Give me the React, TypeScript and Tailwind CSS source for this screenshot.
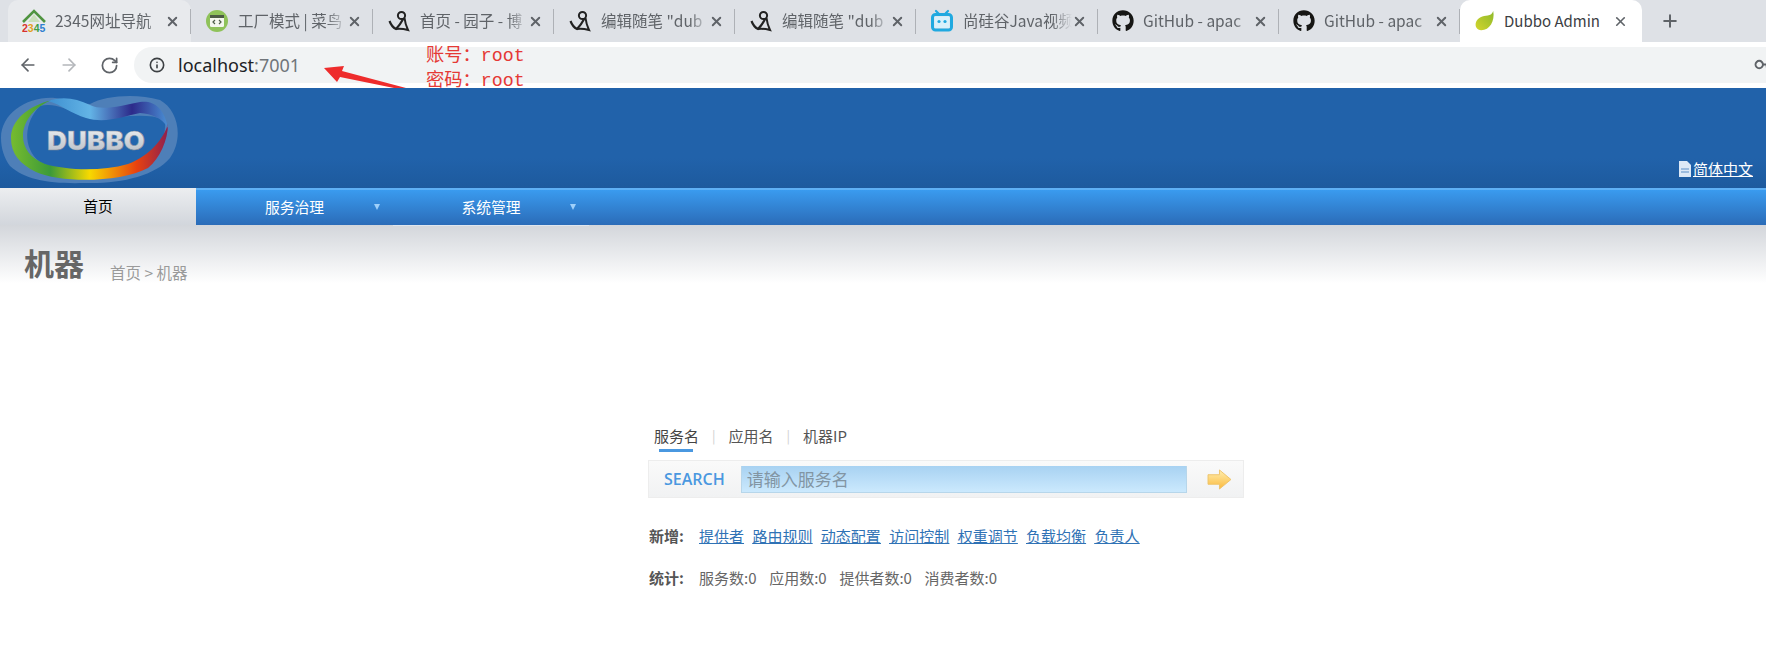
import React from "react";
import { FaGithub } from "react-icons/fa";
import { ArrowLeft, ArrowRight, RotateCw, Info, X, Plus, Key } from "lucide-react";

const cjk = "font-['Noto_Sans_CJK_SC','Noto_Sans',sans-serif]";

const House = () => (
  <svg viewBox="0 0 24 24" className="w-6 h-6 shrink-0">
    <path d="M6 13 L12 5 L18 13 Z" fill="#c9dfba" />
    <path d="M1 13 L12 2 L23 13" fill="none" stroke="#4f9440" strokeWidth="2.6" />
    <text x="0" y="23" fontSize="10.5" fontWeight="700" fontFamily="Liberation Sans, sans-serif">
      <tspan fill="#d8322f">2</tspan>
      <tspan fill="#e3a01b">3</tspan>
      <tspan fill="#3f9f45">4</tspan>
      <tspan fill="#2f7fd0">5</tspan>
    </text>
  </svg>
);

const CodeBadge = () => (
  <svg viewBox="0 0 24 24" className="w-6 h-6 shrink-0">
    <circle cx="12" cy="12" r="11" fill="#8fc25a" />
    <rect x="5" y="6" width="14" height="12" rx="1.5" fill="#f4f7ee" />
    <rect x="5" y="6" width="14" height="3" fill="#4d5c46" />
    <path d="M10 11 L8 13 L10 15 M14 11 L16 13 L14 15" fill="none" stroke="#4d5c46" strokeWidth="1.2" />
  </svg>
);

const Swirl = () => (
  <svg viewBox="0 0 24 24" className="w-6 h-6 shrink-0">
    <circle cx="14.5" cy="6.5" r="3.6" fill="none" stroke="#222" strokeWidth="2" />
    <path d="M2.5 12 C4 16 6 18.5 9 20 C12 17 14 14 16.5 9.5" fill="none" stroke="#222" strokeWidth="2.2" />
    <path d="M17.5 9 C18 13 19 17 21 21 C17 20 13 19.5 9 20" fill="none" stroke="#222" strokeWidth="2" />
  </svg>
);

const TvIcon = () => (
  <svg viewBox="0 0 24 24" className="w-6 h-6 shrink-0">
    <path d="M6 2 L9 5 M18 2 L15 5" stroke="#20a9e0" strokeWidth="2.2" strokeLinecap="round" />
    <rect x="2.5" y="5.5" width="19" height="15.5" rx="3" fill="none" stroke="#20a9e0" strokeWidth="3" />
    <rect x="4.5" y="7.5" width="15" height="11.5" fill="#d9f1fb" />
    <circle cx="9" cy="12.5" r="1.6" fill="#20a9e0" />
    <circle cx="15" cy="12.5" r="1.6" fill="#20a9e0" />
  </svg>
);

const Leaf = () => (
  <svg viewBox="0 0 24 24" className="w-[22px] h-[22px] shrink-0">
    <defs>
      <linearGradient id="leaf" x1="0" y1="1" x2="1" y2="0">
        <stop offset="0" stopColor="#d3d52c" />
        <stop offset="1" stopColor="#8db92a" />
      </linearGradient>
    </defs>
    <path d="M21 1 C23 12 17 22 8 22 C3 22 1 18 2 14 C3.5 8 10 6.5 15 6 C18 5.5 20 4 21 1 Z" fill="url(#leaf)" />
  </svg>
);

const tabs = [
  { icon: <House />, title: "2345网址导航", w: "w-[183px]", bg: "bg-[#e8eaed] rounded-t-[10px]" },
  { icon: <CodeBadge />, title: "工厂模式 | 菜鸟", w: "w-[182px]", bg: "" },
  { icon: <Swirl />, title: "首页 - 园子 - 博", w: "w-[181px]", bg: "" },
  { icon: <Swirl />, title: '编辑随笔 "dub', w: "w-[181px]", bg: "" },
  { icon: <Swirl />, title: '编辑随笔 "dub', w: "w-[181px]", bg: "" },
  { icon: <TvIcon />, title: "尚硅谷Java视频", w: "w-[182px]", bg: "" },
  { icon: <FaGithub className="w-[22px] h-[22px] shrink-0 text-[#161614]" />, title: "GitHub - apac", w: "w-[181px]", bg: "" },
  { icon: <FaGithub className="w-[22px] h-[22px] shrink-0 text-[#161614]" />, title: "GitHub - apac", w: "w-[181px]", bg: "" },
];

const TabStrip = () => (
  <div className={`h-[42px] bg-[#dee1e6] flex items-end ${cjk}`}>
    <div className="w-[8px]" />
    {tabs.map((t, i) => (
      <div key={i} className={`${t.w} ${t.bg} h-[42px] flex items-center pl-[14px]`}>
        {t.icon}
        <span className="flex-1 ml-[9px] overflow-hidden whitespace-nowrap text-[15.5px] text-[#5f6368] [mask-image:linear-gradient(to_right,black_82%,transparent)]">
          {t.title}
        </span>
        <X className="w-[15px] h-[15px] shrink-0 text-[#5f6368]" strokeWidth={3} />
        <span className="w-px h-[25px] ml-[10px] bg-[#aeb1b6]" />
      </div>
    ))}
    <div className="w-[182px] h-[42px] bg-white rounded-t-[10px] flex items-center pl-[14px] pr-[14px] gap-[8px]">
      <Leaf />
      <span className="flex-1 whitespace-nowrap text-[15px] text-[#3c4043]">Dubbo Admin</span>
      <X className="w-[15px] h-[15px] shrink-0 text-[#5f6368]" strokeWidth={2.6} />
    </div>
    <div className="h-[42px] flex items-center pl-[18px]">
      <Plus className="w-[20px] h-[20px] text-[#5f6368]" strokeWidth={2.4} />
    </div>
  </div>
);

const Toolbar = () => (
  <div className="relative h-[46px] bg-white flex items-center overflow-hidden">
    <div className="flex items-center gap-[21px] pl-[18px] pr-[15px]">
      <ArrowLeft className="w-[20px] h-[20px] text-[#5f6368]" strokeWidth={2} />
      <ArrowRight className="w-[20px] h-[20px] text-[#b4b7bb]" strokeWidth={2} />
      <RotateCw className="w-[19px] h-[19px] text-[#5f6368]" strokeWidth={2.2} />
    </div>
    <div className="flex-1 h-[36px] bg-[#f1f3f4] rounded-l-[18px] flex items-center pl-[15px] gap-[13px]">
      <Info className="w-[16px] h-[16px] text-[#3c4043]" strokeWidth={2.4} />
      <span className="text-[18px] font-['Noto_Sans',sans-serif] text-[#202124]">
        localhost<span className="text-[#70757a]">:7001</span>
      </span>
    </div>
    <Key className="absolute right-[-5px] top-[15px] w-[16px] h-[16px] text-[#5f6368] rotate-45" strokeWidth={3} />
    {/* annotation drawn over the screenshot */}
    <div className="absolute left-[426px] top-[2px] text-[#e53935] text-[18.3px] leading-[25px] font-['Liberation_Mono','Noto_Sans_CJK_SC',monospace]">
      <div>账号：root</div>
      <div>密码：root</div>
    </div>
    <svg className="absolute left-[322px] top-[22px]" width="90" height="24" viewBox="0 0 90 24">
      <path d="M2 4 L22 2 L20 7 L84 24 L72 24 L18 13 L15 18 Z" fill="#ee2c2c" />
    </svg>
  </div>
);

const Logo = () => (
  <svg viewBox="0 0 182 100" className="w-[182px] h-[100px] shrink-0">
    <defs>
      <linearGradient id="ring" x1="0" y1="0" x2="1" y2="0">
        <stop offset="0" stopColor="#76bb2f" />
        <stop offset="0.25" stopColor="#3c9a38" />
        <stop offset="0.5" stopColor="#f7d900" />
        <stop offset="0.8" stopColor="#e8420f" />
        <stop offset="1" stopColor="#8e1f4f" />
      </linearGradient>
      <linearGradient id="top" x1="0" y1="0" x2="1" y2="0">
        <stop offset="0" stopColor="#3e8fd0" />
        <stop offset="0.35" stopColor="#63b4e6" />
        <stop offset="0.7" stopColor="#2c2a8a" />
        <stop offset="1" stopColor="#4a8fd4" />
      </linearGradient>
      <linearGradient id="word" x1="0" y1="0" x2="0" y2="1">
        <stop offset="0" stopColor="#f0f2f4" />
        <stop offset="1" stopColor="#b3bac3" />
      </linearGradient>
    </defs>
    <path d="M1 50 C1 25 28 8 55 10 C70 12 80 16 90 16 C105 8 135 5 160 12 C178 22 184 50 170 70 C155 88 120 96 85 95 C50 96 25 92 10 78 C4 70 1 60 1 50 Z" fill="#4e7fb8" />
    <path d="M40 18 C24 34 22 60 40 74 C60 86 120 86 150 70 C162 60 166 46 165 32 C140 22 110 34 85 28 C68 22 54 14 40 18 Z" fill="#2365ad" />
    <path d="M52 12 C28 18 11 32 11 50 C11 66 20 76 36 84 C60 95 120 95 148 80 C160 70 168 52 168 36 C164 50 150 68 128 76 C100 84 66 82 45 76 C30 70 23 60 23 48 C23 32 36 18 52 12 Z" fill="url(#ring)" />
    <path d="M48 13 C62 8 76 10 90 17 C102 23 120 18 140 14 C152 12 164 18 168 40 C162 30 152 26 140 25 C124 28 106 36 86 30 C72 26 60 16 48 13 Z" fill="url(#top)" />
    <text x="47" y="62" fontSize="26" fontWeight="900" fill="url(#word)" textLength="98" lengthAdjust="spacingAndGlyphs" fontFamily="Inter, Liberation Sans, sans-serif" stroke="#7f8b9a" strokeWidth="0.5">
      DUBBO
    </text>
  </svg>
);

const Banner = () => (
  <div className={`h-[100px] bg-[#2162aa] bg-gradient-to-b from-[#2162aa] from-[70%] to-[#1d5a9e] flex items-start justify-between ${cjk}`}>
    <Logo />
    <a className="self-end mb-[9px] mr-[13px] flex items-center gap-[1px] text-white text-[15px] underline leading-[20px]">
      <svg viewBox="0 0 14 16" className="w-[14px] h-[16px]">
        <path d="M1 0 H9 L13 4 V16 H1 Z" fill="#dce8f6" />
        <path d="M3 8 H11 M3 11 H11" stroke="#5b8ec6" strokeWidth="1.2" />
      </svg>
      简体中文
    </a>
  </div>
);

const Caret = () => (
  <span className="absolute right-[13px] top-[14px] w-0 h-0 border-x-[3.5px] border-x-transparent border-t-[6px] border-t-[#9fd0fa]" />
);

const Nav = () => (
  <div className={`h-[37px] flex bg-gradient-to-b from-[#3a9bef] to-[#2b6cb8] border-t-2 border-[#5fb0f5] text-[14.8px] ${cjk}`}>
    <div className="w-[196px] -mt-[2px] h-[37px] bg-gradient-to-b from-[#eceef0] to-[#d2d6dc] flex items-center justify-center text-black">
      首页
    </div>
    <div className="relative w-[197px] flex items-center justify-center text-white">
      服务治理
      <Caret />
    </div>
    <div className="relative w-[196px] h-[36px] flex items-center justify-center text-white border-b border-[#dfe6ee]">
      系统管理
      <Caret />
    </div>
  </div>
);

const PageTitle = () => (
  <div className={`h-[78px] bg-gradient-to-b from-[#d3d6db] to-white to-[75%] flex items-start pl-[24px] pt-[17px] ${cjk}`}>
    <h1 className="text-[30px] leading-[40px] font-bold text-[#666]">机器</h1>
    <span className="ml-[26px] mt-[19px] text-[15.5px] leading-[22px] text-[#9a9a9a]">首页 &gt; 机器</span>
  </div>
);

const addLinks = ["提供者", "路由规则", "动态配置", "访问控制", "权重调节", "负载均衡", "负责人"];
const stats = ["服务数:0", "应用数:0", "提供者数:0", "消费者数:0"];

const SearchPanel = () => (
  <div className={`w-[596px] ml-[648px] mt-[122px] text-[15px] text-[#555] ${cjk}`}>
    <div className="relative flex items-center h-[22px] pl-[6px] leading-[22px]">
      <span className="text-[#444]">服务名</span>
      <span className="mx-[13px] text-[13px] text-[#cfcfcf]">|</span>
      <span>应用名</span>
      <span className="mx-[13px] text-[13px] text-[#cfcfcf]">|</span>
      <span>机器IP</span>
      <span className="absolute left-[11px] top-[24px] w-[34px] h-[3px] bg-[#4a98e0]" />
    </div>
    <div className="mt-[13px] h-[38px] border border-[#ededed] bg-gradient-to-b from-[#fafafa] to-[#f1f2f3] flex items-center pl-[15px] pr-[11px]">
      <span className="w-[77px] text-[16px] font-semibold text-[#4a98e0] font-['Open_Sans',sans-serif]">SEARCH</span>
      <div className="w-[447px] h-[27px] bg-gradient-to-b from-[#a8d2f2] to-[#cbe9fd] border-x border-b border-[#b7d6ea] flex items-center pl-[5px] text-[17px] text-[#8295a3]">
        请输入服务名
      </div>
      <svg viewBox="0 0 26 22" className="ml-[20px] w-[25px] h-[21px]">
        <defs>
          <linearGradient id="go" x1="0" y1="0" x2="0" y2="1">
            <stop offset="0" stopColor="#ffefb0" />
            <stop offset="1" stopColor="#fbb93c" />
          </linearGradient>
        </defs>
        <path d="M1 6 H13 V1 L25 11 L13 21 V16 H1 Z" fill="url(#go)" stroke="#eec36a" strokeWidth="1" />
      </svg>
    </div>
    <div className="mt-[26px] flex h-[24px] items-center">
      <span className="w-[51px] pl-[1px] font-bold text-[#555]">新增:</span>
      <div className="flex gap-[8.4px] text-[#2f72b5] underline">
        {addLinks.map((l) => (
          <a key={l}>{l}</a>
        ))}
      </div>
    </div>
    <div className="mt-[18px] flex h-[24px] items-center">
      <span className="w-[51px] pl-[1px] font-bold text-[#555]">统计:</span>
      <div className="flex gap-[12.7px] text-[#666]">
        {stats.map((s) => (
          <span key={s}>{s}</span>
        ))}
      </div>
    </div>
  </div>
);

export default function App() {
  return (
    <div className="w-[1766px] h-[665px] overflow-hidden bg-white">
      <TabStrip />
      <Toolbar />
      <Banner />
      <Nav />
      <PageTitle />
      <SearchPanel />
    </div>
  );
}
